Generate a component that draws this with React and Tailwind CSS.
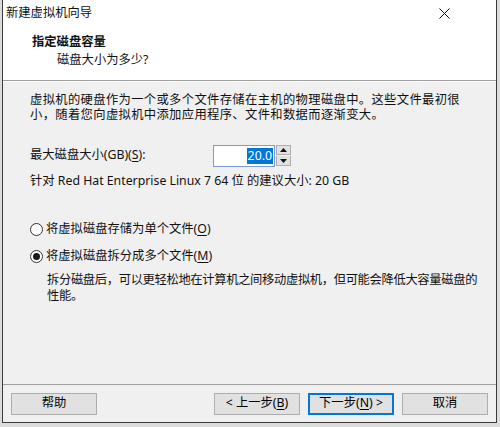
import React from "react";

const F = { fontFamily: '"Noto Sans", "Noto Sans CJK SC", sans-serif' };

function U({ children }) {
  return <span className="underline underline-offset-2">{children}</span>;
}

function Btn({ children, primary }) {
  return (
    <div
      className={
        "w-[86px] h-[22px] flex items-center justify-center bg-[#e1e1e1] text-[12.3px] text-black " +
        (primary ? "border-2 border-[#0078d7]" : "border border-[#adadad]")
      }
    >
      {children}
    </div>
  );
}

function Radio({ checked }) {
  return (
    <div className="w-[13px] h-[13px] rounded-full border border-[#333] bg-white flex items-center justify-center">
      {checked && <div className="w-[7px] h-[7px] rounded-full bg-[#1a1a1a]" />}
    </div>
  );
}

export default function App() {
  return (
    <div className="w-[500px] h-[427px] bg-[#dcdcdc] overflow-hidden" style={F}>
      <div className="ml-[2px] w-[495px] h-[423px] border-l border-r border-b border-[#3c3c3c] bg-[#f0f0f0] flex flex-col text-[12.3px] text-[#111]">
        {/* title bar */}
        <div className="h-[27px] bg-white flex items-center justify-between pl-[3px] pr-[46px]">
          <span className="leading-none">新建虚拟机向导</span>
          <svg width="11" height="11" viewBox="0 0 11 11">
            <path d="M0.5 0.5 L10.5 10.5 M10.5 0.5 L0.5 10.5" stroke="#111" strokeWidth="1" />
          </svg>
        </div>
        {/* header */}
        <div className="h-[54px] bg-white border-b border-[#a0a0a0] flex flex-col pt-[7px] pl-[29px]">
          <div className="font-bold leading-[16px]">指定磁盘容量</div>
          <div className="leading-[16px] mt-[2px] pl-[25px]">磁盘大小为多少?</div>
        </div>
        <div className="h-px bg-white" />
        {/* body */}
        <div className="flex-1 flex flex-col pl-[27px] pr-[10px]">
          <div className="mt-[10px] tracking-[0.35px] whitespace-nowrap leading-[15px]">
            <div>虚拟机的硬盘作为一个或多个文件存储在主机的物理磁盘中。这些文件最初很</div>
            <div>小，随着您向虚拟机中添加应用程序、文件和数据而逐渐变大。</div>
          </div>
          <div className="mt-[23px] flex items-center h-[21px]">
            <span className="w-[183px]">
              最大磁盘大小(GB)(<U>S</U>):
            </span>
            <div className="w-[62px] h-[22px] bg-white border border-[#7a9cd3] flex items-center justify-end pr-[1px]">
              <span className="bg-[#0078d7] text-white leading-[16px] px-[1px]">20.0</span>
            </div>
            <div className="flex flex-col ml-[1px]">
              <div className="w-[15px] h-[10px] bg-[#e1e1e1] border border-[#adadad] flex items-center justify-center">
                <svg width="7" height="4" viewBox="0 0 7 4"><path d="M0 4 L3.5 0 L7 4 Z" fill="#111" /></svg>
              </div>
              <div className="w-[15px] h-[10px] bg-[#e1e1e1] border border-[#adadad] border-t-0 flex items-center justify-center mt-[1px]">
                <svg width="7" height="4" viewBox="0 0 7 4"><path d="M0 0 L3.5 4 L7 0 Z" fill="#111" /></svg>
              </div>
            </div>
          </div>
          <div className="mt-[7px] leading-[16px]">
            针对 Red Hat Enterprise Linux 7 64 位 的建议大小: 20 GB
          </div>
          <div className="mt-[32px] flex items-center gap-[3px] leading-[16px]">
            <Radio />
            <span>
              将虚拟磁盘存储为单个文件(<U>O</U>)
            </span>
          </div>
          <div className="mt-[11px] flex items-center gap-[3px] leading-[16px]">
            <Radio checked />
            <span>
              将虚拟磁盘拆分成多个文件(<U>M</U>)
            </span>
          </div>
          <div className="mt-[8px] pl-[17px] leading-[16px] tracking-[-0.35px] whitespace-nowrap">
            拆分磁盘后，可以更轻松地在计算机之间移动虚拟机，但可能会降低大容量磁盘的
            <br />
            性能。
          </div>
        </div>
        {/* footer */}
        <div className="border-t border-[#a0a0a0] h-[38px] flex items-center px-[8px]">
          <Btn>帮助</Btn>
          <div className="flex-1" />
          <div className="flex gap-[8px]">
            <Btn>
              &lt; 上一步(<U>B</U>)
            </Btn>
            <Btn primary>
              下一步(<U>N</U>) &gt;
            </Btn>
            <Btn>取消</Btn>
          </div>
        </div>
      </div>
    </div>
  );
}
